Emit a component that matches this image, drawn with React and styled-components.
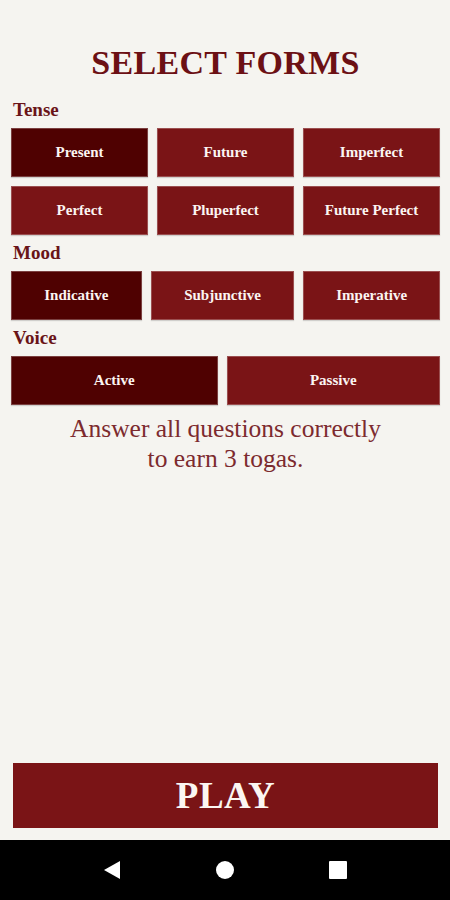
import styled, { createGlobalStyle } from "styled-components";

const GlobalStyle = createGlobalStyle`
  html, body {
    margin: 0;
    padding: 0;
    background: #f5f4f0;
  }
  * {
    box-sizing: border-box;
  }
`;

const Screen = styled.div`
  width: 450px;
  height: 900px;
  display: flex;
  flex-direction: column;
  background: #f5f4f0;
  font-family: "Liberation Serif", "DejaVu Serif", serif;
`;

const Content = styled.div`
  flex: 1;
  display: flex;
  flex-direction: column;
  padding: 0 10px 0 11px;
`;

const Title = styled.h1`
  margin: 34px 0 0;
  height: 58px;
  display: flex;
  align-items: center;
  justify-content: center;
  font-size: 34px;
  font-weight: 700;
  color: #6c1014;
  letter-spacing: 0.3px;
`;

const Label = styled.div`
  height: 36px;
  display: flex;
  align-items: center;
  padding-left: 2px;
  font-size: 19px;
  font-weight: 700;
  color: #6a1418;
`;

const Grid = styled.div`
  display: grid;
  grid-template-columns: ${(p) => p.$cols};
  gap: 9px 9px;
`;

const Option = styled.button`
  height: 49px;
  border: 1px solid rgba(255, 255, 255, 0.25);
  background: ${(p) => (p.$active ? "#4f0101" : "#7a1416")};
  color: #fbf5f2;
  font-family: "Liberation Serif", "DejaVu Serif", serif;
  font-weight: 700;
  font-size: 15px;
  box-shadow: 0 1px 1px rgba(0, 0, 0, 0.15);
  cursor: pointer;
  padding: 0;
`;

const Note = styled.p`
  margin: 9px 0 0;
  text-align: center;
  font-size: 25.5px;
  line-height: 30px;
  color: #7c2a2e;
`;

const PlayButton = styled.button`
  margin: 0 12px 12px 13px;
  height: 65px;
  border: none;
  background: #7a1416;
  color: #fbf6f2;
  font-family: "Liberation Serif", "DejaVu Serif", serif;
  font-weight: 700;
  font-size: 37px;
  letter-spacing: 0.5px;
  cursor: pointer;
`;

const NavBar = styled.div`
  height: 60px;
  background: #000;
  display: flex;
  align-items: center;
  justify-content: center;
`;

const NavSlot = styled.div`
  width: 113px;
  display: flex;
  justify-content: center;
  align-items: center;
`;

const tense = [
  ["Present", true],
  ["Future"],
  ["Imperfect"],
  ["Perfect"],
  ["Pluperfect"],
  ["Future Perfect"],
];
const mood = [["Indicative", true], ["Subjunctive"], ["Imperative"]];
const voice = [["Active", true], ["Passive"]];

const Section = ({ label, items, cols }) => (
  <>
    <Label>{label}</Label>
    <Grid $cols={cols}>
      {items.map(([name, active]) => (
        <Option key={name} $active={active}>
          {name}
        </Option>
      ))}
    </Grid>
  </>
);

export default function App() {
  return (
    <Screen>
      <GlobalStyle />
      <Content>
        <Title>SELECT FORMS</Title>
        <Section label="Tense" items={tense} cols="1fr 1fr 1fr" />
        <Section label="Mood" items={mood} cols="131fr 144fr 137fr" />
        <Section label="Voice" items={voice} cols="207fr 214fr" />
        <Note>
          Answer all questions correctly
          <br />
          to earn 3 togas.
        </Note>
      </Content>
      <PlayButton>PLAY</PlayButton>
      <NavBar>
        <NavSlot>
          <svg width="20" height="20" viewBox="0 0 20 20">
            <path d="M18 1 L18 19 L2 10 Z" fill="#fff" />
          </svg>
        </NavSlot>
        <NavSlot>
          <svg width="20" height="20" viewBox="0 0 20 20">
            <circle cx="10" cy="10" r="9" fill="#fff" />
          </svg>
        </NavSlot>
        <NavSlot>
          <svg width="20" height="20" viewBox="0 0 20 20">
            <rect x="1" y="1" width="18" height="18" rx="1" fill="#fff" />
          </svg>
        </NavSlot>
      </NavBar>
    </Screen>
  );
}
